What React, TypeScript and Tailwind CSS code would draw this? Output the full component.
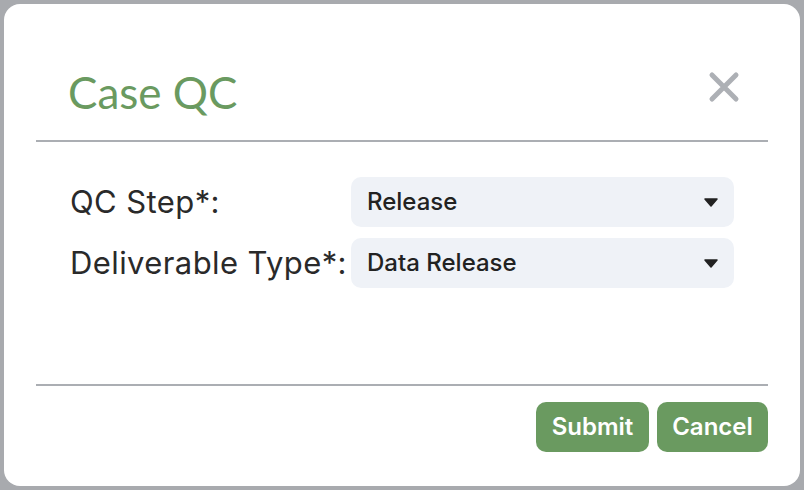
import React from "react";

function Caret() {
  return (
    <svg width="14" height="9" viewBox="0 0 14 9" className="shrink-0">
      <path d="M1 1 L13 1 L7 8 Z" fill="#222" stroke="#222" strokeWidth="1.5" strokeLinejoin="round" />
    </svg>
  );
}

function Select({ value }: { value: string }) {
  return (
    <div className="flex h-[50px] w-[383px] items-center justify-between rounded-[10px] bg-[#eff2f7] pl-[16px] pr-[16px]">
      <span className="text-[24px] font-medium text-[#222]">{value}</span>
      <Caret />
    </div>
  );
}

export default function App() {
  return (
    <div className="h-[490px] w-[804px] bg-[#a8aaae] p-[4px]" style={{ fontFamily: "Inter, 'Liberation Sans', sans-serif" }}>
      <div className="flex h-[482px] w-[796px] flex-col rounded-[16px] bg-white px-[32px]">
        <div className="flex h-[138px] items-center justify-between border-b-2 border-[#abaeb3] pl-[32px] pr-[28px] pt-[30px]">
          <h1 className="pt-[10px] text-[44px] font-normal leading-none text-[#6a9a60]" style={{ fontFamily: "Lato, 'Noto Sans', sans-serif" }}>
            Case QC
          </h1>
          <svg width="32" height="32" viewBox="0 0 32 32">
            <path d="M4 4 L28 28 M28 4 L4 28" stroke="#adb0b5" strokeWidth="5" strokeLinecap="round" />
          </svg>
        </div>
        <div className="flex h-[244px] flex-col gap-[11px] border-b-2 border-[#abaeb3] pl-[34px] pt-[35px]">
          <div className="flex items-center">
            <label className="w-[281px] text-[31px] tracking-[0.4px] text-[#2a2a2a]">QC Step*:</label>
            <Select value="Release" />
          </div>
          <div className="flex items-center">
            <label className="w-[281px] whitespace-nowrap text-[31px] tracking-[0.4px] text-[#2a2a2a]">Deliverable Type*:</label>
            <Select value="Data Release" />
          </div>
        </div>
        <div className="flex justify-end gap-[8px] pt-[16px]">
          <button className="h-[50px] w-[113px] rounded-[10px] bg-[#6a9a60] text-[24px] font-semibold text-white">Submit</button>
          <button className="h-[50px] w-[111px] rounded-[10px] bg-[#6a9a60] text-[24px] font-semibold text-white">Cancel</button>
        </div>
      </div>
    </div>
  );
}
